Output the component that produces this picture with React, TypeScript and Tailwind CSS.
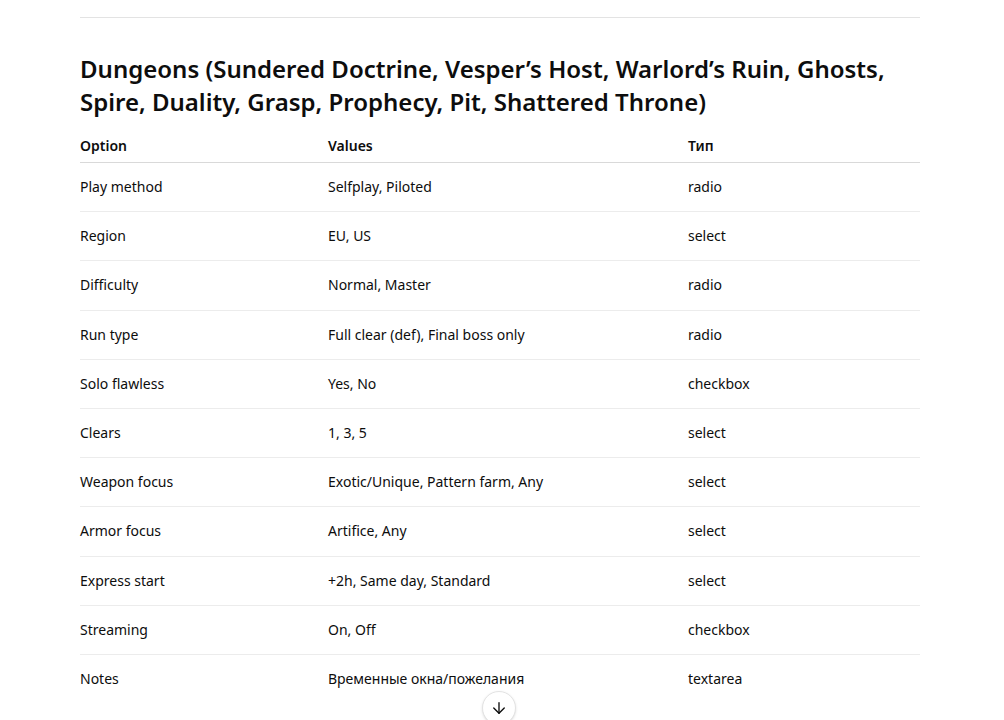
import { ArrowDown } from "lucide-react"

const rows: [string, string, string][] = [
  ["Play method", "Selfplay, Piloted", "radio"],
  ["Region", "EU, US", "select"],
  ["Difficulty", "Normal, Master", "radio"],
  ["Run type", "Full clear (def), Final boss only", "radio"],
  ["Solo flawless", "Yes, No", "checkbox"],
  ["Clears", "1, 3, 5", "select"],
  ["Weapon focus", "Exotic/Unique, Pattern farm, Any", "select"],
  ["Armor focus", "Artifice, Any", "select"],
  ["Express start", "+2h, Same day, Standard", "select"],
  ["Streaming", "On, Off", "checkbox"],
  ["Notes", "Временные окна/пожелания", "textarea"],
]

export default function App() {
  return (
    <div
      className="relative h-[720px] overflow-hidden bg-white text-[#0d0d0d]"
      style={{ fontFamily: '"Noto Sans", "Open Sans", sans-serif' }}
    >
      <div className="ml-[80px] w-[840px] pt-[17px]">
        <div className="h-px bg-[#e3e3e3]" />

        <h3 className="mt-[34px] text-[24px] leading-[33px] font-semibold">
          Dungeons (Sundered Doctrine, Vesper’s Host, Warlord’s Ruin, Ghosts, Spire, Duality, Grasp, Prophecy, Pit, Shattered Throne)
        </h3>

        <div className="mt-[8px] text-[14px]">
          <div className="grid grid-cols-[248px_360px_1fr] border-b border-[#d9d9d9] pt-[10px] pb-[6px] leading-5 font-semibold">
            <div>Option</div>
            <div>Values</div>
            <div>Тип</div>
          </div>
          {rows.map(([opt, vals, type], i) => (
            <div
              key={opt}
              className={
                "grid grid-cols-[248px_360px_1fr] py-3 leading-[24.2px] " +
                (i < rows.length - 1 ? "border-b border-[#ececec]" : "")
              }
            >
              <div>{opt}</div>
              <div>{vals}</div>
              <div>{type}</div>
            </div>
          ))}
        </div>
      </div>

      <button className="absolute left-[482px] top-[691px] flex h-[34px] w-[34px] items-center justify-center rounded-full border border-[#e3e3e3] bg-white shadow-sm">
        <ArrowDown className="h-[18px] w-[18px] text-[#0d0d0d]" strokeWidth={1.8} />
      </button>
    </div>
  )
}
